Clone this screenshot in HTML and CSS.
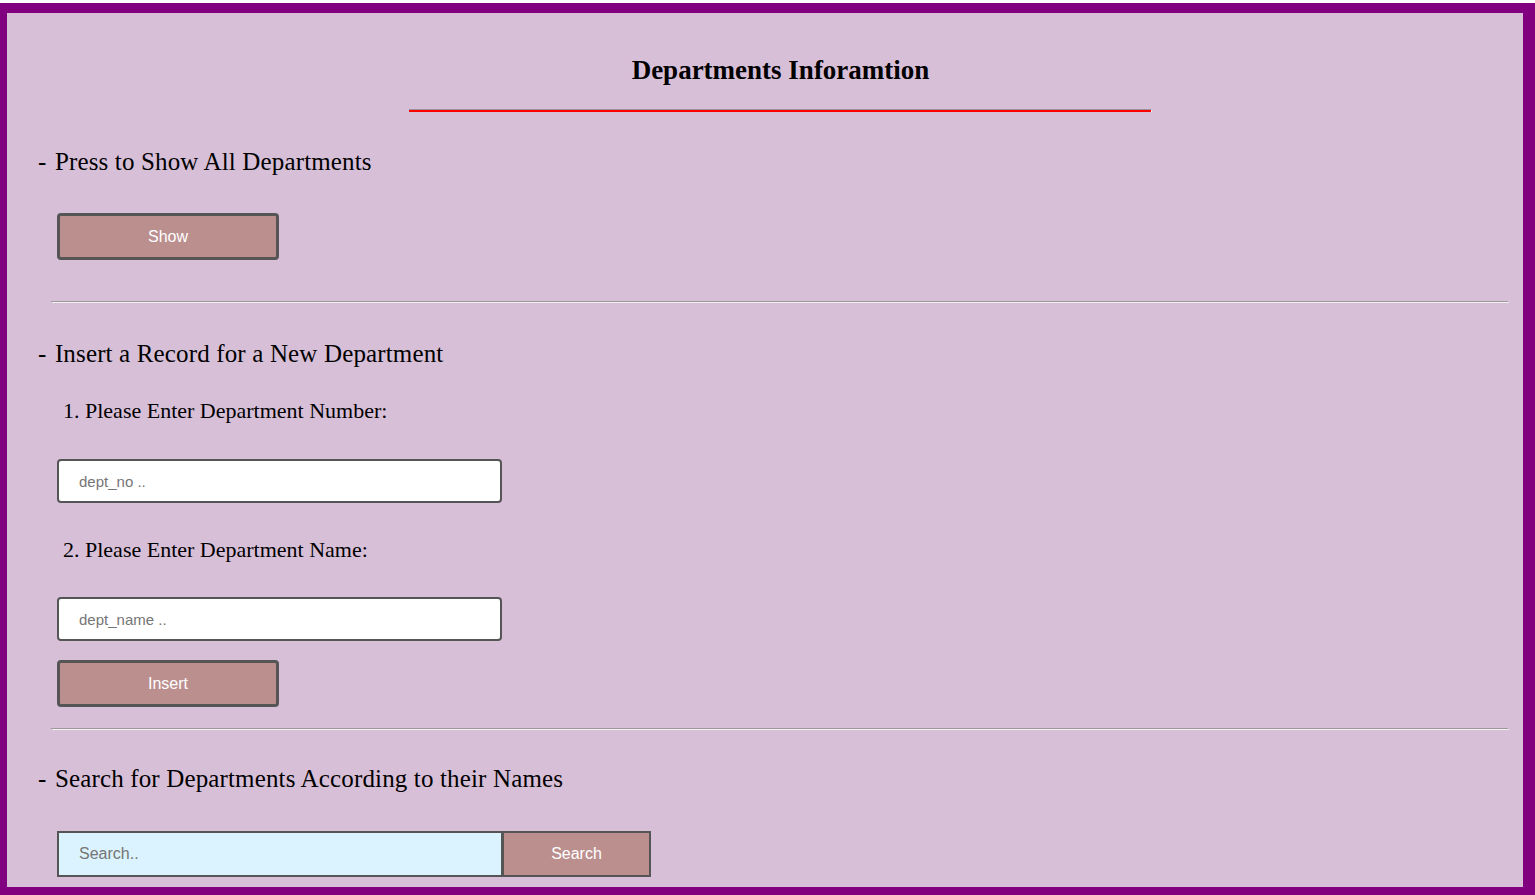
FILE: index.html
```html
<!DOCTYPE html>
<html lang="en">
<head>
<meta charset="utf-8">
<title>Departments Inforamtion</title>
<link rel="stylesheet" href="styles.css">
</head>
<body>
<div class="frame">
  <h1 class="title">Departments Inforamtion</h1>
  <hr class="red-rule">

  <section class="block">
    <h2 class="section-title"><span class="dash">-</span> Press to Show All Departments</h2>
    <button class="btn btn-show" type="button">Show</button>
  </section>

  <hr class="divider divider-1">

  <section class="block">
    <h2 class="section-title"><span class="dash">-</span> Insert a Record for a New Department</h2>
    <p class="field-label label-1">1. Please Enter Department Number:</p>
    <input class="text-input input-1" type="text" placeholder="dept_no ..">
    <p class="field-label label-2">2. Please Enter Department Name:</p>
    <input class="text-input input-2" type="text" placeholder="dept_name ..">
    <button class="btn btn-insert" type="button">Insert</button>
  </section>

  <hr class="divider divider-2">

  <section class="block">
    <h2 class="section-title"><span class="dash">-</span> Search for Departments According to their Names</h2>
    <div class="search-row">
      <input class="search-input" type="text" placeholder="Search..">
      <button class="search-btn" type="button">Search</button>
    </div>
  </section>
</div>
</body>
</html>
```
FILE: styles.css
```css
html, body {
  margin: 0;
  padding: 0;
  background: #ffffff;
}

body {
  padding-top: 3px;
}

.frame {
  box-sizing: border-box;
  height: 892px;
  border-style: solid;
  border-color: #800080;
  border-width: 10px 12px 8px 7px;
  background: #d8bfd8;
  padding: 41px 0 0 31px;
  display: flex;
  flex-direction: column;
  font-family: "Liberation Serif", "Times New Roman", serif;
  color: #000;
}

.title {
  margin: 0;
  font-size: 27px;
  line-height: 32px;
  font-weight: bold;
  text-align: center;
}

.red-rule {
  box-sizing: content-box;
  width: 742px;
  height: 2px;
  margin: 23px auto 0;
  border: 0;
  border-top: 1px solid #9a949a;
  border-right: 1px solid #eeeeee;
  background: #ff0000;
}

.block {
  display: flex;
  flex-direction: column;
  align-items: flex-start;
}

.section-title {
  margin: 35px 0 0;
  font-size: 25px;
  line-height: 30px;
  font-weight: normal;
  letter-spacing: 0.15px;
}

.dash {
  display: inline-block;
  margin-right: 2px;
}

.divider + .block .section-title {
  margin-top: 36px;
}

.divider-2 + .block .section-title {
  margin-top: 34px;
}

.btn {
  box-sizing: border-box;
  width: 222px;
  height: 47px;
  margin-left: 19px;
  border: 3px solid #555555;
  border-radius: 4px;
  background: #bc8f8f;
  color: #ffffff;
  font-family: "Liberation Sans", Arial, sans-serif;
  font-size: 16px;
  padding: 0;
}

.btn-show {
  margin-top: 36px;
}

.btn-insert {
  margin-top: 19px;
}

.divider {
  box-sizing: content-box;
  height: 0;
  border: 1px solid;
  border-color: #9e989e #f2f2f2 #f2f2f2 #9e989e;
  margin: 41px 14px 0 13px;
  align-self: stretch;
}

.divider-2 {
  margin-top: 21px;
}

.field-label {
  margin: 29px 0 0 25px;
  font-size: 22px;
  line-height: 26px;
}

.label-2 {
  margin-top: 34px;
}

.text-input {
  box-sizing: border-box;
  width: 445px;
  height: 44px;
  margin: 35px 0 0 19px;
  padding: 0 0 0 20px;
  border: 2px solid #555555;
  border-radius: 4px;
  background: #ffffff;
  font-family: "Liberation Sans", Arial, sans-serif;
  font-size: 15px;
  outline: none;
}

.input-2 {
  margin-top: 34px;
}

.text-input::placeholder,
.search-input::placeholder {
  color: #757575;
}

.search-row {
  display: flex;
  margin: 37px 0 0 19px;
  height: 46px;
}

.search-input {
  box-sizing: border-box;
  width: 446px;
  height: 46px;
  margin: 0;
  padding: 0 0 0 20px;
  border: 2px solid #555555;
  border-radius: 0;
  background: #dbf3fe;
  font-family: "Liberation Sans", Arial, sans-serif;
  font-size: 16px;
  outline: none;
}

.search-btn {
  box-sizing: border-box;
  width: 148px;
  height: 46px;
  margin: 0;
  padding: 0;
  border: 2px solid #555555;
  border-left-width: 1px;
  border-radius: 0;
  background: #bc8f8f;
  color: #ffffff;
  font-family: "Liberation Sans", Arial, sans-serif;
  font-size: 16px;
}
```
